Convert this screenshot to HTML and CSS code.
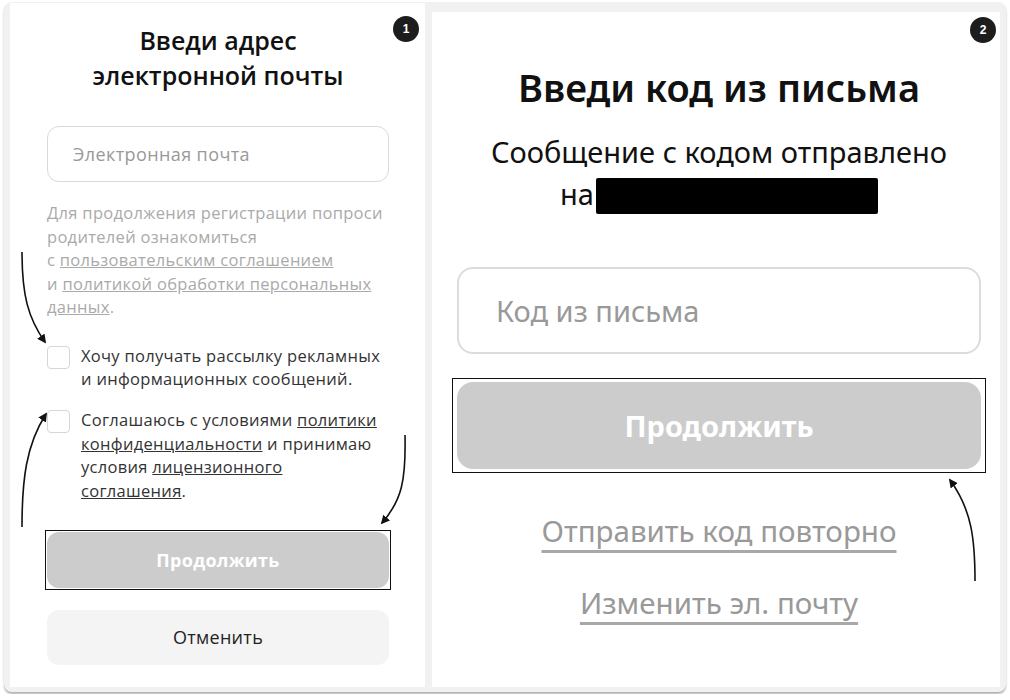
FILE: index.html
```html
<!DOCTYPE html>
<html lang="ru">

<head>
    <meta charset="UTF-8">
    <meta name="viewport" content="width=device-width, initial-scale=1.0">
    <title>Регистрация</title>
    <link rel="stylesheet" href="styles.css">
</head>

<body>
    <div class="frame">
        <!-- step 1 -->
        <div class="panel panel-email">
            <span class="badge">1</span>
            <h2 class="email-title">Введи адрес<br>электронной почты</h2>
            <div class="field field-small">Электронная почта</div>

            <p class="hint">
                Для продолжения регистрации попроси<br>
                родителей ознакомиться<br>
                с <a href="#">пользовательским соглашением</a><br>
                и <a href="#">политикой обработки персональных данных</a>.
            </p>

            <label class="check">
                <span class="box"></span>
                <span>Хочу получать рассылку рекламных<br>и информационных сообщений.</span>
            </label>

            <label class="check check-last">
                <span class="box"></span>
                <span>Соглашаюсь с условиями <a href="#">политики конфиденциальности</a> и принимаю
                    условия <a href="#">лицензионного<br>соглашения</a>.</span>
            </label>

            <div class="marked marked-small">
                <button class="btn btn-disabled btn-small">Продолжить</button>
            </div>
            <button class="btn btn-cancel btn-small">Отменить</button>
        </div>

        <!-- step 2 -->
        <div class="panel panel-code">
            <span class="badge">2</span>
            <h1 class="code-title">Введи код из письма</h1>
            <p class="sent">Сообщение с кодом отправлено<br>на<span class="redacted"></span></p>
            <div class="field field-big">Код из письма</div>
            <div class="marked marked-big">
                <button class="btn btn-disabled btn-big">Продолжить</button>
            </div>
            <a class="link-big link-first" href="#">Отправить код повторно</a>
            <a class="link-big" href="#">Изменить эл. почту</a>
        </div>
    </div>

    <svg class="arrows" width="1010" height="700" viewBox="0 0 1010 700">
        <defs>
            <marker id="head" viewBox="0 0 10 10" refX="8" refY="5" markerWidth="9" markerHeight="9"
                markerUnits="userSpaceOnUse" orient="auto">
                <path d="M0 0 L10 5 L0 10 Z" fill="#111"/>
            </marker>
        </defs>
        <g fill="none" stroke="#111" stroke-width="1.6">
            <path d="M22 252 C 22 295, 28 318, 45 342" marker-end="url(#head)"/>
            <path d="M22 527 C 22 480, 26 445, 46 414" marker-end="url(#head)"/>
            <path d="M405 435 C 406 480, 402 500, 382 523" marker-end="url(#head)"/>
            <path d="M975 581 C 975 540, 972 510, 950 480" marker-end="url(#head)"/>
        </g>
    </svg>
</body>

</html>
```

FILE: styles.css
```css
body {
    margin: 0;
    padding: 2px 4px;
    background: #ffffff;
    font-family: 'Open Sans', 'Noto Sans', sans-serif;
    color: #222;
    position: relative;
    width: 1002px;
}

.frame {
    display: flex;
    gap: 7px;
    height: 690px;
    box-sizing: border-box;
    padding: 1px 6px 5px 6px;
    background-color: #f1f1f1;
    border-radius: 8px;
    box-shadow: 0 2px 2px rgba(0, 0, 0, 0.3);
}

.panel {
    position: relative;
    background: #ffffff;
    display: flex;
    flex-direction: column;
}

.badge {
    position: absolute;
    width: 26px;
    height: 26px;
    border-radius: 50%;
    background: #1d1d1d;
    color: #fff;
    font-family: 'Liberation Sans', sans-serif;
    font-weight: bold;
    font-size: 12px;
    line-height: 26px;
    text-align: center;
}

/* left card */

.panel-email {
    width: 415px;
    padding: 20px 36px 0 37px;
    box-sizing: border-box;
}

.panel-email .badge {
    top: 13px;
    right: 6px;
}

.email-title {
    margin: 0;
    font-size: 25px;
    line-height: 35px;
    font-weight: 600;
    text-align: center;
    color: #111;
}

.field {
    border: 1px solid #d9d9d9;
    box-sizing: border-box;
    color: #999;
    display: flex;
    align-items: center;
}

.field-small {
    height: 56px;
    margin-top: 33px;
    border-radius: 12px;
    padding-left: 25px;
    font-size: 18px;
    letter-spacing: 0.4px;
}

.hint {
    margin: 19px 0 0 0;
    font-size: 16.5px;
    letter-spacing: 0.3px;
    line-height: 23.5px;
    color: #aaa;
}

.hint a {
    color: #aaa;
}

.check {
    display: flex;
    gap: 11px;
    font-size: 16.5px;
    letter-spacing: 0.3px;
    line-height: 23.7px;
    color: #333;
    margin-top: 25px;
}

.check a {
    color: #333;
}

.check-last {
    margin-top: 17px;
}

.box {
    flex: none;
    width: 23px;
    height: 23px;
    box-sizing: border-box;
    border: 1px solid #d6d6d6;
    border-radius: 4px;
    margin-top: 2px;
}

.btn {
    display: block;
    width: 100%;
    border: none;
    font-family: inherit;
}

.btn-small {
    height: 56px;
    border-radius: 12px;
    font-size: 18px;
    letter-spacing: 0.3px;
}

.btn-disabled {
    background: #cccccc;
    color: #fff;
    font-weight: bold;
}

.btn-cancel {
    background: #f4f4f4;
    color: #222;
    margin-top: 20px;
    height: 55px;
}

.marked {
    border: 1px solid #111;
    padding: 1px;
}

.marked-small {
    margin: 27px -2px 0 -2px;
}

/* right card */

.panel-code {
    flex: 1;
    margin-top: 9px;
    padding: 53px 19px 0 25px;
    font-family: 'Noto Sans', sans-serif;
    align-items: center;
}

.panel-code .badge {
    top: 5px;
    right: 4px;
}

.code-title {
    margin: 0;
    font-size: 38px;
    line-height: 44px;
    font-weight: 600;
    color: #111;
}

.sent {
    margin: 22px 0 0 0;
    font-size: 29px;
    line-height: 42px;
    text-align: center;
    color: #111;
}

.redacted {
    display: inline-block;
    width: 282px;
    height: 36px;
    background: #000;
    border-radius: 2px;
    vertical-align: -9px;
    margin-left: 2px;
}

.field-big {
    align-self: stretch;
    height: 87px;
    margin-top: 52px;
    border: 2px solid #dcdcdc;
    border-radius: 16px;
    padding-left: 37px;
    font-size: 29px;
}

.marked-big {
    align-self: stretch;
    margin: 24px -5px 0 -5px;
    padding: 3px 4px;
}

.btn-big {
    height: 87px;
    border-radius: 16px;
    font-size: 29px;
}

.link-big {
    font-size: 29.5px;
    line-height: 40px;
    color: #999;
    text-decoration: underline;
    text-decoration-color: #a8a8a8;
    text-decoration-thickness: 3px;
    text-decoration-skip-ink: none;
    text-underline-offset: 8px;
}

.link-first {
    margin-top: 38px;
    margin-bottom: 32px;
}

.arrows {
    position: absolute;
    left: 0;
    top: 0;
    pointer-events: none;
}
```
